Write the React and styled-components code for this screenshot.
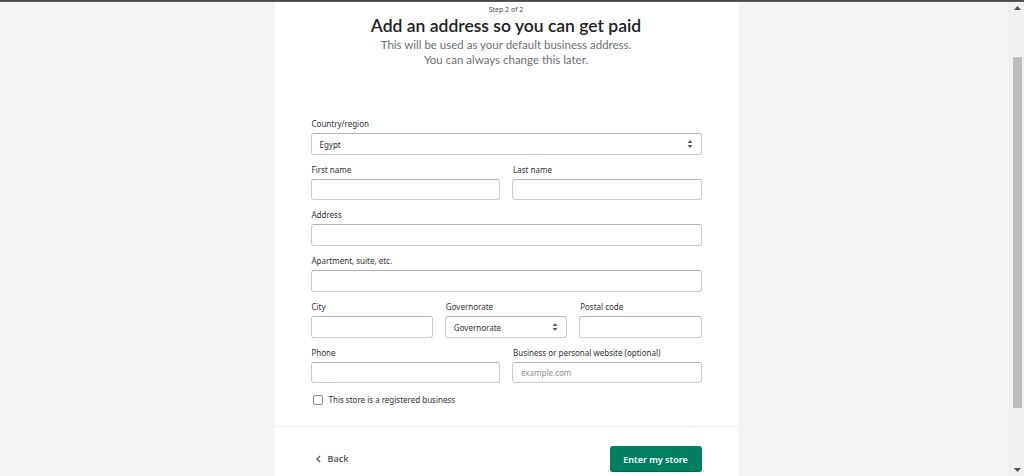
import React from 'react';
import styled, { createGlobalStyle } from 'styled-components';

const GlobalStyle = createGlobalStyle`
  html, body {
    margin: 0;
    padding: 0;
    height: 100%;
    overflow: hidden;
    background: #f4f4f4;
    font-family: "Noto Sans", "Open Sans", sans-serif;
  }
  #root { height: 100%; }
`;

const Shell = styled.div`
  display: flex;
  flex-direction: column;
  height: 476px;
`;
const TopLine = styled.div`
  height: 2px;
  background: linear-gradient(#3b3b3b, #6a6a6a);
  flex-shrink: 0;
`;
const Body = styled.div`
  flex: 1;
  display: flex;
  min-height: 0;
`;
const Stage = styled.main`
  flex: 1;
  display: flex;
  justify-content: center;
  overflow: hidden;
`;
const Card = styled.section`
  width: 463px;
  background: #fff;
  display: flex;
  flex-direction: column;
  margin-left: 3px;
`;
const Header = styled.header`
  padding-top: 3px;
  text-align: center;
`;
const Step = styled.div`
  font-size: 7px;
  line-height: 10px;
  color: #4a4a4a;
`;
const Title = styled.h1`
  margin: 0;
  font-family: Lato, "Noto Sans", sans-serif;
  font-size: 17.5px;
  line-height: 21px;
  font-weight: 600;
  color: #202223;
`;
const Sub = styled.p`
  margin: 0;
  padding-top: 1px;
  font-family: Lato, "Noto Sans", sans-serif;
  font-size: 11.5px;
  line-height: 15px;
  color: #6d7175;
`;
const Form = styled.form`
  padding: 51px 36px 17px 36px;
  display: flex;
  flex-direction: column;
  gap: 9px;
`;
const Row = styled.div`
  display: grid;
  grid-template-columns: repeat(${p => p.cols || 1}, 1fr);
  gap: 12px;
`;
const Field = styled.label`
  display: flex;
  flex-direction: column;
  gap: 3px;
`;
const Label = styled.span`
  font-size: 8px;
  line-height: 12px;
  color: #303234;
  padding-left: 1px;
`;
const Input = styled.div`
  position: relative;
  height: ${p => p.h || 22}px;
  box-sizing: border-box;
  border: 1px solid #c9cccf;
  border-top-color: #aeb4b9;
  border-radius: 3px;
  background: #fff;
  display: flex;
  align-items: center;
  padding: 0 8px;
  font-size: 8px;
  color: ${p => (p.placeholder ? '#8c9196' : '#303234')};
`;
const Arrows = styled.svg`
  position: absolute;
  right: 8px;
  top: 50%;
  transform: translateY(-50%);
`;
const Check = styled.div`
  display: flex;
  align-items: center;
  gap: 6px;
  margin-top: 2px;
  margin-bottom: 4px;
  font-size: 8px;
  color: #303234;
  padding-left: 2px;
`;
const Box = styled.span`
  width: 10px;
  height: 10px;
  box-sizing: border-box;
  border: 1px solid #8c9196;
  border-radius: 2px;
`;
const Footer = styled.footer`
  border-top: 1px solid #eceeef;
  padding: 19px 36px;
  display: flex;
  justify-content: space-between;
  align-items: center;
`;
const Back = styled.a`
  display: flex;
  align-items: center;
  gap: 7px;
  font-size: 9px;
  font-weight: 600;
  color: #5c5f62;
  padding-left: 5px;
  margin-top: -1px;
`;
const Button = styled.button`
  width: 92px;
  height: 26px;
  border: none;
  border-radius: 3px;
  background: #008060;
  color: #fff;
  font-family: inherit;
  font-size: 9px;
  font-weight: 600;
  box-shadow: inset 0 -1px 0 rgba(0, 0, 0, 0.2);
`;
const Scrollbar = styled.div`
  width: 15px;
  flex-shrink: 0;
  background: #f1f1f1;
  display: flex;
  flex-direction: column;
  align-items: center;
  padding: 4px 0;
  box-sizing: border-box;
  border-left: 1px solid #e9e9e9;
`;
const ArrowBtn = styled.svg`
  flex-shrink: 0;
`;
const Track = styled.div`
  flex: 1;
  width: 100%;
  display: flex;
  justify-content: center;
  padding: 47px 0 60px;
  box-sizing: border-box;
`;
const Thumb = styled.div`
  width: 9px;
  background: #bdbdbd;
  margin-left: 1px;
`;

const SelectArrows = () => (
  <Arrows width="6" height="9" viewBox="0 0 6 9">
    <path d="M3 0.5L5.5 3.5H0.5Z M3 8.5L0.5 5.5H5.5Z" fill="#5c5f62" />
  </Arrows>
);

const F = ({ label, value, placeholder, select, h }) => (
  <Field>
    <Label>{label}</Label>
    <Input h={h} placeholder={placeholder ? 1 : 0}>
      {value || placeholder}
      {select && <SelectArrows />}
    </Input>
  </Field>
);

export default function App() {
  return (
    <>
      <GlobalStyle />
      <Shell>
        <TopLine />
        <Body>
          <Stage>
            <Card>
              <Header>
                <Step>Step 2 of 2</Step>
                <Title>Add an address so you can get paid</Title>
                <Sub>
                  This will be used as your default business address.
                  <br />
                  You can always change this later.
                </Sub>
              </Header>
              <Form>
                <F label="Country/region" value="Egypt" select />
                <Row cols={2}>
                  <F label="First name" h={21} />
                  <F label="Last name" h={21} />
                </Row>
                <F label="Address" />
                <F label="Apartment, suite, etc." />
                <Row cols={3}>
                  <F label="City" />
                  <F label="Governorate" value="Governorate" select />
                  <F label="Postal code" />
                </Row>
                <Row cols={2}>
                  <F label="Phone" h={21} />
                  <F label="Business or personal website (optional)" placeholder="example.com" h={21} />
                </Row>
                <Check>
                  <Box />
                  This store is a registered business
                </Check>
              </Form>
              <Footer>
                <Back>
                  <svg width="5" height="8" viewBox="0 0 5 8">
                    <path d="M4 1L1 4L4 7" stroke="#5c5f62" strokeWidth="1.4" fill="none" />
                  </svg>
                  Back
                </Back>
                <Button type="button">Enter my store</Button>
              </Footer>
            </Card>
          </Stage>
          <Scrollbar>
            <ArrowBtn width="7" height="4" viewBox="0 0 7 4">
              <path d="M3.5 0L7 4H0Z" fill="#505050" />
            </ArrowBtn>
            <Track>
              <Thumb />
            </Track>
            <ArrowBtn width="7" height="4" viewBox="0 0 7 4">
              <path d="M0 0H7L3.5 4Z" fill="#505050" />
            </ArrowBtn>
          </Scrollbar>
        </Body>
      </Shell>
    </>
  );
}
